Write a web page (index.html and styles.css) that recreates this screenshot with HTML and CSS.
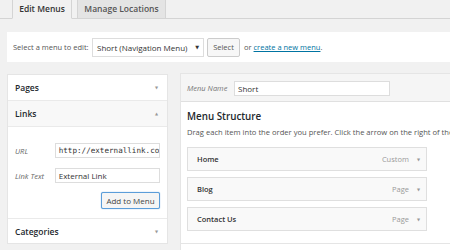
FILE: index.html
```html
<!DOCTYPE html>
<html>
<head>
<meta charset="utf-8">
<link rel="stylesheet" href="styles.css">
</head>
<body>
<div class="tabs">
  <div class="tab active">Edit Menus</div>
  <div class="tab">Manage Locations</div>
</div>
<div class="manage-bar">
  <span class="bar-label">Select a menu to edit:</span>
  <div class="select-box"><span>Short (Navigation Menu)</span><span class="sel-arrow">▼</span></div>
  <div class="btn small">Select</div>
  <span class="or">or <a class="link">create a new menu</a>.</span>
</div>
<div class="columns">
  <div class="side">
    <div class="sec-head"><span>Pages</span><span class="chev">▼</span></div>
    <div class="sec-head open"><span>Links</span><span class="chev">▲</span></div>
    <div class="sec-body">
      <div class="row"><span class="lbl">URL</span><div class="input mono">http://externallink.com</div></div>
      <div class="row"><span class="lbl">Link Text</span><div class="input">External Link</div></div>
      <div class="btn-row"><div class="btn add">Add to Menu</div></div>
    </div>
    <div class="sec-head last"><span>Categories</span><span class="chev">▼</span></div>
  </div>
  <div class="main">
    <div class="main-head">
      <span class="name-lbl">Menu Name</span>
      <div class="input name">Short</div>
    </div>
    <div class="main-body">
      <h3>Menu Structure</h3>
      <p class="desc">Drag each item into the order you prefer. Click the arrow on the right of the item to reveal additional configuration options.</p>
      <div class="item"><span class="t">Home</span><span class="type">Custom</span><span class="ichev">▼</span></div>
      <div class="item"><span class="t">Blog</span><span class="type">Page</span><span class="ichev">▼</span></div>
      <div class="item"><span class="t">Contact Us</span><span class="type">Page</span><span class="ichev">▼</span></div>
    </div>
    <div class="main-foot"></div>
  </div>
</div>
</body>
</html>
```
FILE: styles.css
```css
html, body { margin: 0; padding: 0; }
body {
  width: 450px; height: 250px; overflow: hidden;
  background: #f1f1f1;
  font-family: "Open Sans", "DejaVu Sans", sans-serif;
  color: #444;
}
.tabs {
  display: flex; gap: 5px;
  padding-left: 12px;
  height: 18px;
  border-bottom: 1px solid #d4d4d4;
  align-items: flex-end;
}
.tab {
  height: 19px; margin-bottom: -1px;
  box-sizing: border-box;
  border: 1px solid #d4d4d4; border-top: none;
  background: #e4e4e4;
  font-size: 8.5px; font-weight: 600; color: #555;
  display: flex; align-items: center; justify-content: center;
  padding-bottom: 2px;
}
.tab.active { width: 60px; background: #f1f1f1; border-bottom-color: #f1f1f1; color: #333; }
.tab:not(.active) { width: 89px; }
.manage-bar {
  margin: 13px 0 0 7px;
  height: 30px;
  background: #fff;
  display: flex; align-items: center;
  padding-left: 6px;
  font-size: 7.5px; color: #555;
}
.bar-label { width: 79px; white-space: nowrap; }
.select-box {
  width: 112px; height: 19px; box-sizing: border-box;
  border: 1px solid #ddd; background: #fff;
  display: flex; align-items: center; justify-content: space-between;
  padding: 0 4px 0 4px;
  font-size: 8px; color: #333;
}
.sel-arrow { font-size: 5px; color: #333; }
.btn {
  box-sizing: border-box;
  border: 1px solid #ccc; background: #f7f7f7;
  border-radius: 2px;
  display: flex; align-items: center; justify-content: center;
  color: #555;
}
.btn.small { width: 33px; height: 19px; margin-left: 3px; font-size: 7.5px; }
.or { margin-left: 4px; font-size: 7.5px; color: #555; }
.link { color: #0074a2; text-decoration: underline; }
.columns {
  display: flex; gap: 12px;
  margin: 11px 0 0 7px;
  align-items: flex-start;
}
.side {
  width: 161px; flex: none;
  background: #fff;
  border: 1px solid #e5e5e5; box-sizing: border-box;
  margin-top: 1px;
}
.sec-head {
  height: 26px; box-sizing: border-box;
  border-bottom: 1px solid #eaeaea;
  display: flex; align-items: center; justify-content: space-between;
  padding: 0 9px 0 7px;
  font-size: 8.5px; font-weight: 600; color: #23282d;
}
.sec-head.open { background: #f8f8f8; }
.sec-head.last { border-bottom: none; height: 25px; border-top: 1px solid #eaeaea; }
.chev { font-size: 4px; color: #999; }
.sec-body { padding: 16px 7px 9px 7px; }
.row { display: flex; align-items: center; height: 15px; margin-bottom: 10px; }
.lbl { width: 40px; font-size: 7.5px; font-style: italic; color: #666; }
.input {
  box-sizing: border-box; height: 15px;
  border: 1px solid #ddd; background: #fff;
  font-size: 8px; color: #333;
  display: flex; align-items: center;
  padding-left: 3px; overflow: hidden; white-space: nowrap;
}
.row .input { width: 106px; }
.input.mono { font-family: "DejaVu Sans Mono", monospace; font-size: 7.6px; }
.btn-row { display: flex; justify-content: flex-end; margin-top: -1px; padding-right: 0; }
.btn.add {
  width: 59px; height: 17px; font-size: 8px; color: #444;
  border-color: #5b9dd9; box-shadow: 0 0 1px #5b9dd9;
  background: #f5f5f5;
}
.main {
  flex: 1; min-width: 0;
  background: #fff;
  border: 1px solid #e5e5e5; border-right: none;
  overflow: hidden;
}
.main-head {
  height: 28px; box-sizing: border-box;
  background: #f5f5f5;
  border-bottom: 1px solid #e0e0e0;
  display: flex; align-items: center;
  padding-left: 6px;
}
.name-lbl { width: 47px; font-size: 7.5px; font-style: italic; color: #777; }
.input.name { width: 156px; height: 15px; margin-top: 1px; }
.main-body { padding: 8px 0 12px 6px; }
h3 { margin: 0; font-size: 9.8px; font-weight: 600; color: #23282d; line-height: 14px; }
.desc { margin: 3px 0 0 0; font-size: 7.6px; color: #555; white-space: nowrap; line-height: 11px; }
.item {
  width: 240px; height: 24px; box-sizing: border-box;
  border: 1px solid #dfdfdf; background: #f9f9f9;
  display: flex; align-items: center;
  padding: 0 6px 0 9px;
  margin-top: 6px;
  font-size: 7.5px;
}
.item:first-of-type { margin-top: 9px; }
.item .t { flex: 1; font-weight: 600; color: #333; }
.item .type { color: #999; font-size: 7.5px; }
.ichev { font-size: 4px; color: #999; margin-left: 8px; }
.main-foot { border-top: 1px solid #e5e5e5; height: 10px; }
```
